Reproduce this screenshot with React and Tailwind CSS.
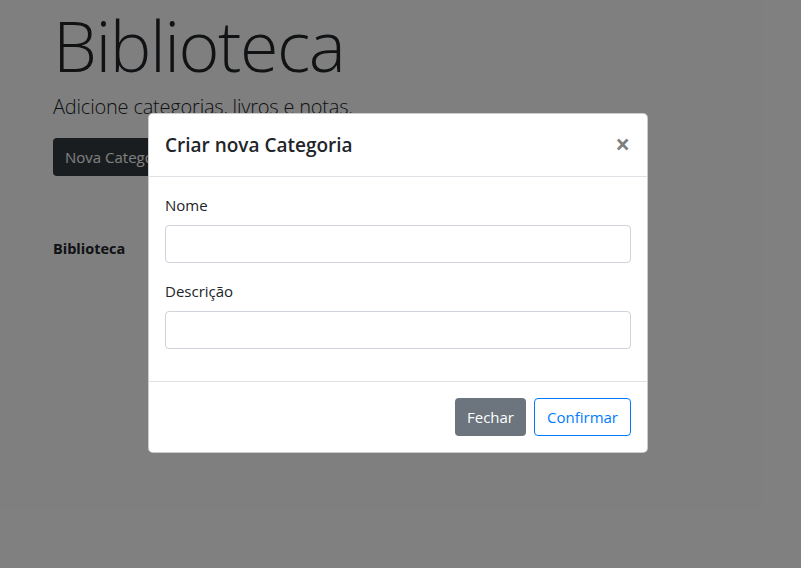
import React from "react";

export default function App() {
  return (
    <div
      className="relative w-[801px] h-[568px] overflow-hidden bg-white text-[#212529]"
      style={{ fontFamily: '"Open Sans", "Noto Sans", sans-serif' }}
    >
      {/* page */}
      <div className="pl-[53px]">
        <h1 className="text-[70px] font-light leading-[90px] tracking-[-1.5px] m-0">Biblioteca</h1>
        <p className="text-[20px] font-light leading-[1.5] mt-[2px] tracking-[-0.2px]">Adicione categorias, livros e notas.</p>
        <button className="mt-[16px] h-[38px] px-[12px] rounded-[4px] bg-[#343a40] text-white text-[15px]">
          Nova Categoria
        </button>
        <div className="mt-[62px] text-[14.5px] leading-[1.5] font-bold">Biblioteca</div>
      </div>

      {/* backdrop */}
      <div className="absolute inset-0 bg-black/50" />

      {/* modal */}
      <div className="absolute left-[148px] top-[113px] w-[500px] bg-white border border-black/20 rounded-[5px] flex flex-col">
        <div className="flex items-center justify-between h-[63px] px-[16px] border-b border-[#dee2e6]">
          <h5 className="text-[19px] font-semibold leading-[1.5]">Criar nova Categoria</h5>
          <button className="text-[26px] font-bold leading-none text-black/50 pr-[1px] pb-[2px]">×</button>
        </div>
        <div className="px-[16px] pt-[16px] pb-[16px]">
          <div className="mb-[16px]">
            <label className="block text-[15px] leading-[24px] mb-[8px]">Nome</label>
            <div className="h-[38px] border border-[#ced4da] rounded-[4px]" />
          </div>
          <div className="mb-[16px]">
            <label className="block text-[15px] leading-[24px] mb-[8px]">Descrição</label>
            <div className="h-[38px] border border-[#ced4da] rounded-[4px]" />
          </div>
        </div>
        <div className="flex justify-end gap-[8px] px-[16px] py-[16px] border-t border-[#dee2e6]">
          <button className="h-[38px] px-[12px] rounded-[4px] bg-[#6c757d] text-white text-[15px]">Fechar</button>
          <button className="h-[38px] px-[12px] rounded-[4px] border border-[#007bff] text-[#007bff] text-[15px]">Confirmar</button>
        </div>
      </div>
    </div>
  );
}
